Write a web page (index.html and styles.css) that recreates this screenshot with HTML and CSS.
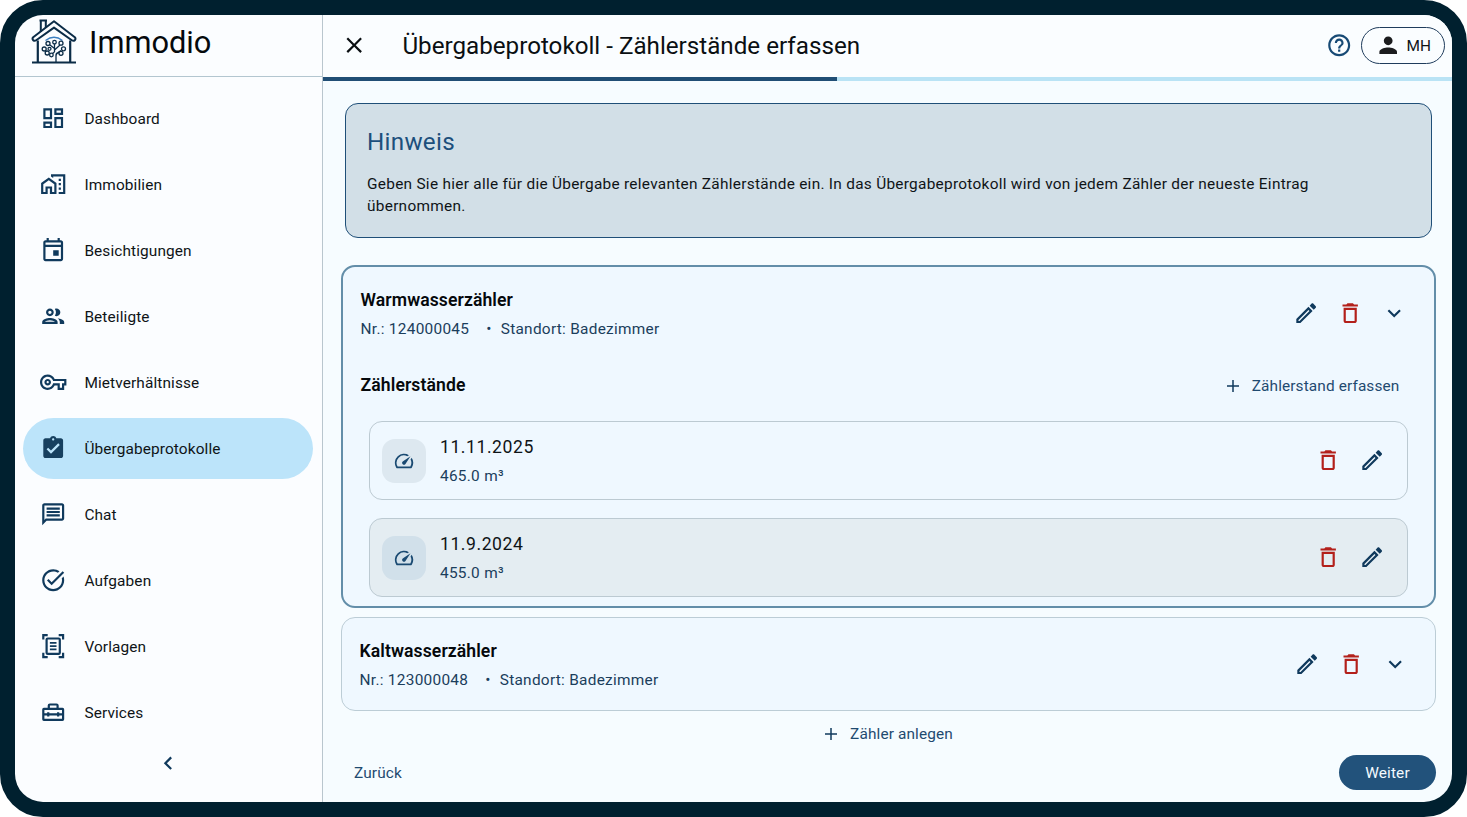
FILE: index.html
```html
<!DOCTYPE html>
<html lang="de">
<head>
    <meta charset="UTF-8">
    <meta name="viewport" content="width=device-width, initial-scale=1.0">
    <title>Immodio - Übergabeprotokoll</title>
    <link rel="stylesheet" href="styles.css">
</head>
<body>
    <!-- Icons -->
    <svg class="sprite" xmlns="http://www.w3.org/2000/svg">
        <symbol id="i-edit" viewBox="0 0 24 24"><path d="M14.06 9.02l.92.92L5.92 19H5v-.92l9.06-9.06M17.66 3c-.25 0-.51.1-.7.29l-1.83 1.83 3.75 3.75 1.83-1.83c.39-.39.39-1.02 0-1.41l-2.34-2.34c-.2-.2-.45-.29-.71-.29zm-3.6 3.19L3 17.25V21h3.75L17.81 9.94l-3.75-3.75z"/></symbol>
        <symbol id="i-delete" viewBox="0 0 24 24"><path d="M6 19c0 1.1.9 2 2 2h8c1.1 0 2-.9 2-2V7H6v12zM8 9h8v10H8V9zm7.5-5l-1-1h-5l-1 1H5v2h14V4h-3.5z"/></symbol>
        <symbol id="i-down" viewBox="0 0 24 24"><path d="M7.41 8.59L12 13.17l4.59-4.58L18 10l-6 6-6-6z"/></symbol>
        <symbol id="i-add" viewBox="0 0 24 24"><path d="M20 13h-7v7h-2v-7H4v-2h7V4h2v7h7z"/></symbol>
        <symbol id="i-speed" viewBox="0 0 24 24"><path d="M20.38 8.57l-1.23 1.85a8 8 0 0 1-.22 7.58H5.07A8 8 0 0 1 15.58 6.85l1.85-1.23A10 10 0 0 0 3.35 19a2 2 0 0 0 1.72 1h13.85a2 2 0 0 0 1.74-1 10 10 0 0 0-.27-10.44zm-9.79 6.84a2 2 0 0 0 2.83 0l5.66-8.49-8.49 5.66a2 2 0 0 0 0 2.83z"/></symbol>
    </svg>

    <div class="window">
        <aside class="sidebar">
            <div class="brand">
                <svg class="brand-logo" viewBox="0 0 46 46" fill="none" stroke="#0b2c47" stroke-width="2" stroke-linejoin="round">
                    <path d="M1 43.5h44M6.8 43V21.5M39.2 43V21.5" stroke-width="2.2"/>
                    <path d="M9.8 13V1.5h5V9M8.5 1.500h7.5"/>
                    <path d="M23 2.2 2.2 18.2q-1.4 1.7.2 3.2 1.2.9 2.8-.2L23 8.6l17.800 12.600q1.6 1.100 2.8.2 1.6-1.5.2-3.2z"/>
                    <g stroke-width="1.3">
                        <path d="M14.500 21.500q8.500-6.500 17 0" stroke="#3b7fc0"/>
                        <path d="M25 43v-7q0-2 3-2.500M25 37q0-3 5-5.500M23.500 33V25M23.500 33l-2 1.500M19 26l4.500 3.500M29 26l-5.500 5"/>
                        <circle cx="17" cy="24.500" r="2"/>
                        <circle cx="23.500" cy="23.200" r="1.800"/>
                        <circle cx="30" cy="24.200" r="2"/>
                        <circle cx="13.200" cy="30" r="2"/>
                        <circle cx="16.200" cy="34" r="2"/>
                        <circle cx="20.400" cy="36" r="1.800"/>
                        <circle cx="30" cy="34.300" r="2"/>
                        <circle cx="32.500" cy="29.800" r="2"/>
                        <circle cx="18.500" cy="29.800" r="1.500"/>
                    </g>
                </svg>
                <span class="brand-name">Immodio</span>
            </div>

            <nav class="nav">
                <a class="nav-item">
                    <svg class="icon" viewBox="0 0 24 24"><path d="M19 5v2h-4V5h4M9 5v6H5V5h4m10 8v6h-4v-6h4M9 17v2H5v-2h4M21 3h-8v6h8V3zM11 3H3v10h8V3zm10 8h-8v10h8V11zm-10 4H3v6h8v-6z"/></svg>
                    <span>Dashboard</span>
                </a>
                <a class="nav-item">
                    <svg class="icon" viewBox="0 0 24 24"><path d="M1 11v10h6v-5h2v5h6V11L8 6l-7 5zm12 8h-2v-5H5v5H3v-7l5-3.5 5 3.5v7zM17 7h2v2h-2zM17 11h2v2h-2zM17 15h2v2h-2zM10 3v1.97l2 1.43V5h9v14h-4v2h6V3z"/></svg>
                    <span>Immobilien</span>
                </a>
                <a class="nav-item">
                    <svg class="icon" viewBox="0 0 24 24"><path d="M19 3h-1V1h-2v2H8V1H6v2H5c-1.11 0-2 .9-2 2v15c0 1.1.89 2 2 2h14c1.1 0 2-.9 2-2V5c0-1.1-.9-2-2-2zm0 17H5V9h14v11zm0-13H5V5h14v2zM12 12h5v5h-5z"/></svg>
                    <span>Besichtigungen</span>
                </a>
                <a class="nav-item">
                    <svg class="icon" viewBox="0 0 24 24"><path d="M9 13.75c-2.34 0-7 1.17-7 3.5V19h14v-1.75c0-2.33-4.66-3.5-7-3.5zM4.34 17c.84-.58 2.87-1.25 4.66-1.25s3.82.67 4.66 1.25H4.34zM9 12c1.93 0 3.5-1.57 3.5-3.5S10.93 5 9 5 5.5 6.57 5.5 8.5 7.07 12 9 12zm0-5c.83 0 1.5.67 1.5 1.5S9.83 10 9 10s-1.5-.67-1.5-1.5S8.17 7 9 7zm7.04 6.81c1.16.84 1.96 1.96 1.96 3.44V19h4v-1.75c0-2.02-3.5-3.17-5.96-3.44zM15 12c1.93 0 3.5-1.57 3.5-3.5S16.93 5 15 5c-.54 0-1.04.13-1.5.35.63.89 1 1.98 1 3.15s-.37 2.26-1 3.15c.46.22.96.35 1.5.35z"/></svg>
                    <span>Beteiligte</span>
                </a>
                <a class="nav-item">
                    <svg class="icon" viewBox="0 0 24 24"><path d="M22 19h-6v-4h-2.68c-1.14 2.42-3.6 4-6.32 4-3.86 0-7-3.14-7-7s3.14-7 7-7c2.72 0 5.17 1.58 6.32 4H24v6h-2v4zm-4-2h2v-4h2v-2H11.94l-.23-.67C11.01 8.34 9.11 7 7 7c-2.76 0-5 2.24-5 5s2.24 5 5 5c2.11 0 4.01-1.34 4.71-3.33l.23-.67H18v4zM7 15c-1.65 0-3-1.35-3-3s1.35-3 3-3 3 1.35 3 3-1.35 3-3 3zm0-4c-.55 0-1 .45-1 1s.45 1 1 1 1-.45 1-1-.45-1-1-1z"/></svg>
                    <span>Mietverhältnisse</span>
                </a>
                <a class="nav-item active">
                    <svg class="icon" viewBox="0 0 24 24"><path d="M19 3h-4.18C14.4 1.84 13.3 1 12 1c-1.3 0-2.4.84-2.82 2H5c-1.1 0-2 .9-2 2v14c0 1.1.9 2 2 2h14c1.1 0 2-.9 2-2V5c0-1.1-.9-2-2-2zm-7 0c.55 0 1 .45 1 1s-.45 1-1 1-1-.45-1-1 .45-1 1-1zm-2 14l-4-4 1.41-1.41L10 14.17l6.59-6.59L18 9l-8 8z"/></svg>
                    <span>Übergabeprotokolle</span>
                </a>
                <a class="nav-item">
                    <svg class="icon" viewBox="0 0 24 24"><path d="M4 4h16v12H5.17L4 17.17V4m0-2c-1.1 0-1.99.9-1.99 2L2 22l4-4h14c1.1 0 2-.9 2-2V4c0-1.1-.9-2-2-2H4zm2 10h12v2H6v-2zm0-3h12v2H6V9zm0-3h12v2H6V6z"/></svg>
                    <span>Chat</span>
                </a>
                <a class="nav-item">
                    <svg class="icon" viewBox="0 0 24 24"><path d="M22 5.18L10.59 16.6l-4.24-4.24 1.41-1.41 2.83 2.83 10-10L22 5.18zm-2.21 5.04c.13.57.21 1.17.21 1.78 0 4.42-3.58 8-8 8s-8-3.58-8-8 3.58-8 8-8c1.58 0 3.04.46 4.28 1.25l1.44-1.44C16.1 2.67 14.13 2 12 2 6.48 2 2 6.48 2 12s4.48 10 10 10 10-4.48 10-10c0-1.19-.22-2.33-.6-3.39l-1.61 1.61z"/></svg>
                    <span>Aufgaben</span>
                </a>
                <a class="nav-item">
                    <svg class="icon icon-line" viewBox="0 0 24 24"><path d="M3 6V2h4M17 2h4v4M21 18v4h-4M7 22H3v-4"/><rect x="6" y="5" width="12" height="14" rx="1"/><path d="M9 9h6M9 12h6M9 15h6" stroke-width="1.6"/></svg>
                    <span>Vorlagen</span>
                </a>
                <a class="nav-item">
                    <svg class="icon icon-line" viewBox="0 0 24 24"><rect x="3" y="9" width="18" height="10" rx=".5"/><path d="M8 9V6q0-1 1-1h6q1 0 1 1v3M3 14h18M7.5 12v4M16.5 12v4"/></svg>
                    <span>Services</span>
                </a>
            </nav>

            <div class="collapse">
                <svg class="icon" viewBox="0 0 24 24"><path d="M15.41 7.41L14 6l-6 6 6 6 1.41-1.41L10.83 12z"/></svg>
            </div>
        </aside>

        <main class="main">
            <header class="topbar">
                <svg class="icon close" viewBox="0 0 24 24"><path d="M19 6.41L17.59 5 12 10.59 6.41 5 5 6.41 10.59 12 5 17.59 6.41 19 12 13.41 17.59 19 19 17.59 13.41 12z"/></svg>
                <h1>Übergabeprotokoll - Zählerstände erfassen</h1>
                <svg class="icon help" viewBox="0 0 24 24"><path d="M11 18h2v-2h-2v2zm1-16C6.48 2 2 6.48 2 12s4.48 10 10 10 10-4.48 10-10S17.52 2 12 2zm0 18c-4.41 0-8-3.59-8-8s3.59-8 8-8 8 3.59 8 8-3.59 8-8 8zm0-14c-2.21 0-4 1.79-4 4h2c0-1.1.9-2 2-2s2 .9 2 2c0 2-3 1.75-3 5h2c0-2.25 3-2.5 3-5 0-2.21-1.79-4-4-4z"/></svg>
                <button class="user">
                    <svg class="icon" viewBox="0 0 24 24"><path d="M12 12c2.21 0 4-1.79 4-4s-1.79-4-4-4-4 1.79-4 4 1.79 4 4 4zm0 2c-2.67 0-8 1.34-8 4v2h16v-2c0-2.66-5.33-4-8-4z"/></svg>
                    <span>MH</span>
                </button>
            </header>
            <div class="progress"><div class="progress-bar"></div></div>

            <section class="hint">
                <h2>Hinweis</h2>
                <p>Geben Sie hier alle für die Übergabe relevanten Zählerstände ein. In das Übergabeprotokoll wird von jedem Zähler der neueste Eintrag übernommen.</p>
            </section>

            <section class="meter open">
                <div class="meter-head">
                    <div class="meter-info">
                        <h3>Warmwasserzähler</h3>
                        <p><span class="nr">Nr.: 124000045</span><span class="dot">•</span><span>Standort: Badezimmer</span></p>
                    </div>
                    <div class="actions">
                        <svg class="icon"><use href="#i-edit"/></svg>
                        <svg class="icon delete"><use href="#i-delete"/></svg>
                        <svg class="icon"><use href="#i-down"/></svg>
                    </div>
                </div>
                <div class="readings-head">
                    <h3>Zählerstände</h3>
                    <button class="link-btn"><svg class="icon"><use href="#i-add"/></svg><span>Zählerstand erfassen</span></button>
                </div>
                <div class="readings">
                    <div class="reading">
                        <div class="tile"><svg class="icon"><use href="#i-speed"/></svg></div>
                        <div class="reading-info">
                            <h4>11.11.2025</h4>
                            <p>465.0 m³</p>
                        </div>
                        <div class="actions">
                            <svg class="icon delete"><use href="#i-delete"/></svg>
                            <svg class="icon"><use href="#i-edit"/></svg>
                        </div>
                    </div>
                    <div class="reading old">
                        <div class="tile"><svg class="icon"><use href="#i-speed"/></svg></div>
                        <div class="reading-info">
                            <h4>11.9.2024</h4>
                            <p>455.0 m³</p>
                        </div>
                        <div class="actions">
                            <svg class="icon delete"><use href="#i-delete"/></svg>
                            <svg class="icon"><use href="#i-edit"/></svg>
                        </div>
                    </div>
                </div>
            </section>

            <section class="meter">
                <div class="meter-head">
                    <div class="meter-info">
                        <h3>Kaltwasserzähler</h3>
                        <p><span class="nr">Nr.: 123000048</span><span class="dot">•</span><span>Standort: Badezimmer</span></p>
                    </div>
                    <div class="actions">
                        <svg class="icon"><use href="#i-edit"/></svg>
                        <svg class="icon delete"><use href="#i-delete"/></svg>
                        <svg class="icon"><use href="#i-down"/></svg>
                    </div>
                </div>
            </section>

            <button class="link-btn add-meter"><svg class="icon"><use href="#i-add"/></svg><span>Zähler anlegen</span></button>

            <footer class="footer">
                <button class="back">Zurück</button>
                <button class="next">Weiter</button>
            </footer>
        </main>
    </div>
</body>
</html>
```
FILE: styles.css
```css
* {
    box-sizing: border-box;
    margin: 0;
    padding: 0;
}
body {
    font-family: Roboto, sans-serif;
    font-size: 15.4px;
    letter-spacing: 0.28px;
    color: #0f1417;
    background: #fff;
    overflow: hidden;
}
button {
    font: inherit;
    letter-spacing: 0.12px;
    color: inherit;
    background: none;
    border: none;
    cursor: pointer;
}
.sprite {
    display: none;
}
.icon {
    width: 26.4px;
    height: 26.4px;
    fill: #103a5d;
    flex-shrink: 0;
    display: block;
}
.icon-line {
    fill: none;
    stroke: #103a5d;
    stroke-width: 2;
}
.window {
    display: flex;
    width: 1467px;
    height: 817px;
    border: 15px solid #00202f;
    border-radius: 43px;
    background: #00202f;
}

/* Sidebar */
.sidebar {
    width: 308px;
    flex-shrink: 0;
    background: #fbfdff;
    border-right: 1px solid #b9c6ce;
    border-radius: 28px 0 0 28px;
}
.brand {
    display: flex;
    gap: 12px;
    height: 62px;
    padding: 4px 0 0 16px;
    border-bottom: 1px solid #b3c6d0;
}
.brand-logo {
    width: 46px;
    height: 46px;
}
.brand-name {
    font-size: 30.8px;
    line-height: 48px;
    letter-spacing: 0;
    color: #05090c;
}
.nav {
    display: flex;
    flex-direction: column;
    gap: 5px;
    padding: 11px 9px 0 8px;
}
.nav-item {
    display: flex;
    align-items: center;
    gap: 17.6px;
    height: 61px;
    padding-left: 17.4px;
    border-radius: 31px;
    letter-spacing: 0.12px;
}
.nav-item.active {
    background: #bce4fa;
}
.nav-item.active .icon {
    fill: #17405f;
}
.collapse {
    display: flex;
    justify-content: center;
    margin-top: 7px;
}

/* Main area */
.main {
    flex: 1;
    display: flex;
    flex-direction: column;
    background: #f6fcff;
    border-radius: 0 28px 28px 0;
}
.topbar {
    display: flex;
    align-items: center;
    height: 62px;
    padding: 0 7px 1px 18px;
    background: #fafdff;
    border-radius: 0 28px 0 0;
}
.topbar h1 {
    flex: 1;
    margin-left: 35px;
    font-size: 24.2px;
    font-weight: 400;
    line-height: 28px;
    letter-spacing: 0;
    color: #0a0f12;
}
.close {
    fill: #0a0f12;
}
.help {
    fill: #174a75;
}
.user {
    display: flex;
    align-items: center;
    gap: 5px;
    width: 84px;
    height: 37px;
    margin-left: 9px;
    padding-left: 13px;
    border: 1px solid #1f3c5c;
    border-radius: 19px;
}
.user .icon {
    fill: #1b1c1e;
}
.progress {
    height: 4px;
    background: #b9e3f5;
}
.progress-bar {
    width: 514px;
    height: 100%;
    background: #204e75;
}
.hint {
    height: 135px;
    margin: 22px 20px 0 22px;
    padding: 24px 21px 0;
    background: #d2dfe7;
    border: 1px solid #1f4f78;
    border-radius: 13px;
}
.hint h2 {
    font-size: 24.2px;
    font-weight: 400;
    line-height: 28px;
    letter-spacing: 0.3px;
    color: #1c4f7c;
}
.hint p {
    margin-top: 17px;
    line-height: 22px;
}

/* Meter cards */
.meter {
    margin: 9px 16px 0 18px;
    padding: 0 26.6px 0 17.6px;
    background: #eff8ff;
    border: 1px solid #bccdd6;
    border-radius: 14px;
}
.meter.open {
    height: 343px;
    margin-top: 27px;
    border: 2px solid #638ea9;
}
.meter-head {
    display: flex;
    justify-content: space-between;
    align-items: center;
    height: 92px;
}
.meter h3 {
    font-size: 17.6px;
    font-weight: 600;
    line-height: 26px;
    letter-spacing: 0.08px;
    color: #05090c;
}
.meter-info p {
    display: flex;
    margin-top: 5px;
    line-height: 22px;
    color: #1b3e5c;
}
.dot {
    margin: 0 9px 0 17px;
}
.actions {
    display: flex;
    gap: 17.6px;
}
.icon.delete {
    fill: #b3201b;
}
.readings-head {
    display: flex;
    justify-content: space-between;
    align-items: center;
    height: 52px;
    padding-right: 8px;
}
.link-btn {
    display: flex;
    align-items: center;
    gap: 10px;
    color: #1f4a70;
}
.link-btn .icon {
    width: 18px;
    height: 18px;
}
.readings-head .link-btn {
    padding-top: 2px;
}
.readings {
    display: flex;
    flex-direction: column;
    gap: 18px;
    margin: 10px -0.4px 0 8.4px;
}
.reading {
    display: flex;
    align-items: center;
    height: 79px;
    padding: 0 21px 0 12px;
    border: 1px solid #bccad2;
    border-radius: 13px;
}
.reading.old {
    background: #e4edf2;
}
.tile {
    display: flex;
    align-items: center;
    justify-content: center;
    width: 44px;
    height: 44px;
    background: #dde8f0;
    border-radius: 13px;
}
.reading.old .tile {
    background: #d1e0ea;
}
.tile .icon {
    width: 22px;
    height: 22px;
    fill: #1a4a72;
}
.reading-info {
    flex: 1;
    margin-left: 14px;
}
.reading-info h4 {
    font-size: 17.6px;
    font-weight: 400;
    line-height: 26px;
    letter-spacing: 0.55px;
}
.reading-info p {
    margin-top: 5px;
    line-height: 22px;
    color: #1b3e5c;
}
.add-meter {
    align-self: center;
    height: 22px;
    margin-top: 12px;
}

/* Footer */
.footer {
    display: flex;
    justify-content: space-between;
    align-items: center;
    margin-top: 10px;
    padding: 0 16px 0 31px;
}
.back {
    color: #1f4a70;
}
.next {
    width: 97px;
    height: 35px;
    background: #22527b;
    color: #f4faff;
    border-radius: 18px;
}
```
